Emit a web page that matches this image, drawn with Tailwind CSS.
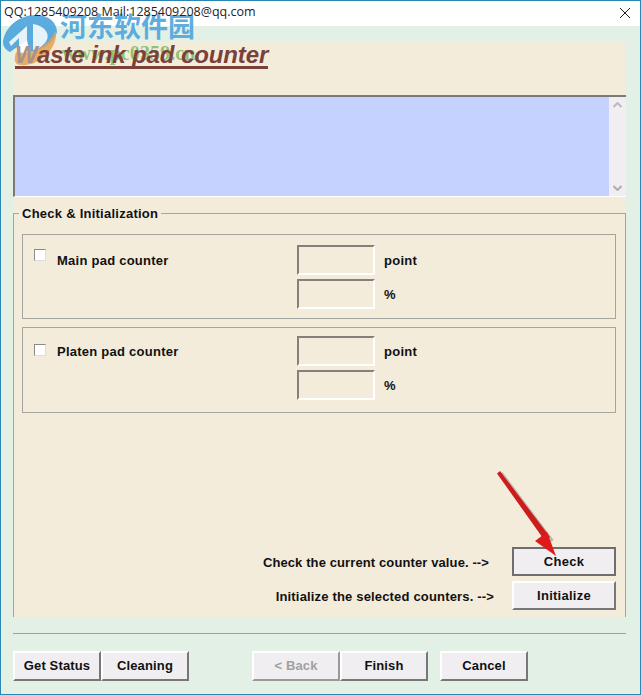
<!DOCTYPE html>
<html lang="en">
<head>
    <meta charset="UTF-8">
    <title>Waste ink pad counter</title>
    <script src="https://cdn.jsdelivr.net/npm/@tailwindcss/browser@4"></script>
</head>
<body class="bg-[#e3f0e5]">
    <div class="relative w-[641px] h-[695px] overflow-hidden bg-[#e3f0e5] border border-[#2a86b4] font-['Liberation_Sans',sans-serif] font-bold text-[13px] tracking-[0.25px] text-[#111]">
        <!-- title bar -->
        <div class="flex items-center justify-between h-[25px] bg-white pl-[3px] pr-[6px] pb-[2px] font-['Open_Sans',sans-serif] font-normal text-[12.5px] tracking-normal text-[#222]">
            <span class="relative z-10">QQ:1285409208 Mail:1285409208@qq.com</span>
            <svg width="12" height="12" viewBox="0 0 12 12" class="mr-[3px]"><path d="M1 1L11 11M11 1L1 11" stroke="#222" stroke-width="1" fill="none"/></svg>
        </div>

        <div class="ml-[12px] mr-[14px] mt-[15px] h-[576px] bg-[#f4ecdb] flex flex-col">
            <div class="h-[54px] pl-[2px] pt-[1px]">
                <h1 class="relative z-10 inline-block h-[27px] border-b-[3px] border-[#7a403a] italic text-[24px] leading-[25px] tracking-[-0.12px] text-[#7a403a]"><span class="text-[#a8918c]">W</span>aste ink pad counter</h1>
            </div>
            <!-- list box -->
            <div class="flex h-[102px] border-t-2 border-l-2 border-[#7c7a78] border-b border-b-white">
                <div class="flex-1 bg-[#c5d1fe]"></div>
                <div class="w-[17px] bg-[#f0eef0] flex flex-col justify-between items-center py-[5px]">
                    <svg width="9" height="6" viewBox="0 0 9 6"><path d="M0.5 5L4.5 1L8.5 5" stroke="#bdbabd" stroke-width="2" fill="none"/></svg>
                    <svg width="9" height="6" viewBox="0 0 9 6"><path d="M0.5 1L4.5 5L8.5 1" stroke="#b0adb0" stroke-width="2" fill="none"/></svg>
                </div>
            </div>
            <!-- group -->
            <div class="relative mt-[16px] flex-1 border-t border-l border-r border-[#a5a5a0] pl-[8px] pr-[9px] pt-[20px]">
                <span class="absolute left-[5px] top-[-8px] bg-[#f4ecdb] px-[3px] leading-[15px]">Check &amp; Initialization</span>
                <div class="flex flex-col gap-[8px]">
                    <div class="flex h-[85px] border border-[#a5a5a0] pl-[11px] pt-[10px]">
                        <span class="w-[12px] h-[12px] mt-[4px] bg-white border border-[#8d8a86] border-r-[#ddd] border-b-[#ddd]"></span>
                        <span class="w-[240px] ml-[11px] mt-[8px] leading-[15px]">Main pad counter</span>
                        <div class="flex flex-col gap-[4px]">
                            <div class="flex items-center gap-[9px]"><span class="w-[78px] h-[30px] border-2 border-[#85817a] border-r-white border-b-white"></span><span class="mt-[2px]">point</span></div>
                            <div class="flex items-center gap-[9px]"><span class="w-[78px] h-[30px] border-2 border-[#85817a] border-r-white border-b-white"></span><span class="mt-[2px]">%</span></div>
                        </div>
                    </div>
                    <div class="flex h-[86px] border border-[#a5a5a0] pl-[11px] pt-[8px]">
                        <span class="w-[12px] h-[12px] mt-[8px] bg-white border border-[#8d8a86] border-r-[#ddd] border-b-[#ddd]"></span>
                        <span class="w-[240px] ml-[11px] mt-[8px] leading-[15px]">Platen pad counter</span>
                        <div class="flex flex-col gap-[4px]">
                            <div class="flex items-center gap-[9px]"><span class="w-[78px] h-[30px] border-2 border-[#85817a] border-r-white border-b-white"></span><span class="mt-[2px]">point</span></div>
                            <div class="flex items-center gap-[9px]"><span class="w-[78px] h-[30px] border-2 border-[#85817a] border-r-white border-b-white"></span><span class="mt-[2px]">%</span></div>
                        </div>
                    </div>
                </div>
                <div class="absolute right-[9px] bottom-[7px] flex flex-col gap-[5px]">
                    <div class="flex items-center justify-end">
                        <span class="mr-[23px] mt-[2px] tracking-[0.11px]">Check the current counter value. --&gt;</span>
                        <button class="w-[104px] h-[29px] bg-[#f0eef0] border-2 border-[#6e6e6e] font-bold">Check</button>
                    </div>
                    <div class="flex items-center justify-end">
                        <span class="mr-[18px] mt-[2px] tracking-[0.17px]">Initialize the selected counters. --&gt;</span>
                        <button class="w-[104px] h-[29px] bg-[#f0eef0] border-2 border-white border-r-[#777] border-b-[#777] font-bold">Initialize</button>
                    </div>
                </div>
            </div>
        </div>

        <!-- footer -->
        <div class="ml-[12px] mr-[14px] mt-[16px] border-t border-[#a0a0a0] pt-[17px] flex tracking-[0.15px]">
            <button class="w-[88px] h-[30px] bg-[#f0eef0] border-2 border-white border-r-[#777] border-b-[#777] font-bold">Get Status</button>
            <button class="w-[88px] h-[30px] bg-[#f0eef0] border-2 border-white border-r-[#777] border-b-[#777] font-bold">Cleaning</button>
            <button class="ml-[63px] w-[88px] h-[30px] bg-[#f0eef0] border-2 border-white border-r-[#999] border-b-[#999] font-bold text-[#a0a0a0]">&lt; Back</button>
            <button class="w-[88px] h-[30px] bg-[#f0eef0] border-2 border-white border-r-[#777] border-b-[#777] font-bold">Finish</button>
            <button class="ml-[12px] w-[88px] h-[30px] bg-[#f0eef0] border-2 border-white border-r-[#777] border-b-[#777] font-bold">Cancel</button>
        </div>

        <!-- watermark -->
        <svg class="absolute left-[-1px] top-[11px]" width="62" height="56" viewBox="0 0 62 56">
            <path d="M3 30C5 14 20 3 36 3C48 3 57 10 57 20C54 30 44 38 30 40L27 28L10 40C6 38 3 35 3 30Z" fill="#4aa3dc" fill-opacity="0.9"/>
            <path d="M56 19C58 36 40 55 20 53C14 52 14 48 16 40C26 44 46 38 56 19Z" fill="#e8a050" fill-opacity="0.85"/>
            <path d="M9 30L27 14V40H19V26L11 34Z" fill="#fff" fill-opacity="0.85"/>
            <path d="M33 12C46 14 52 24 44 32C40 36 36 38 33 38Z" fill="#fff" fill-opacity="0.85"/>
        </svg>
        <span class="absolute left-[59px] top-[9px] font-['Noto_Sans_CJK_SC',sans-serif] font-bold text-[27px] leading-[32px] tracking-normal text-[#4aa3dc]/90">河东软件园</span>
        <span class="absolute left-[61px] top-[42px] font-['Liberation_Serif',serif] font-bold text-[20px] leading-[20px] tracking-[0.1px] text-[#5fb04a]/70">www.pc0359.cn</span>

        <!-- arrow -->
        <svg class="absolute left-[490px] top-[465px]" width="75" height="95" viewBox="0 0 75 95">
            <path d="M6 7L9 5L60 73L55 77Z" fill="#000" fill-opacity="0.22" transform="translate(2.5 1)"/>
            <path d="M6 7.5L9 5L59 71L54 75Z" fill="#cc1c1c"/>
            <path d="M44 75L56 66L65 90Z" fill="#e01a1a"/>
        </svg>
    </div>
</body>
</html>
